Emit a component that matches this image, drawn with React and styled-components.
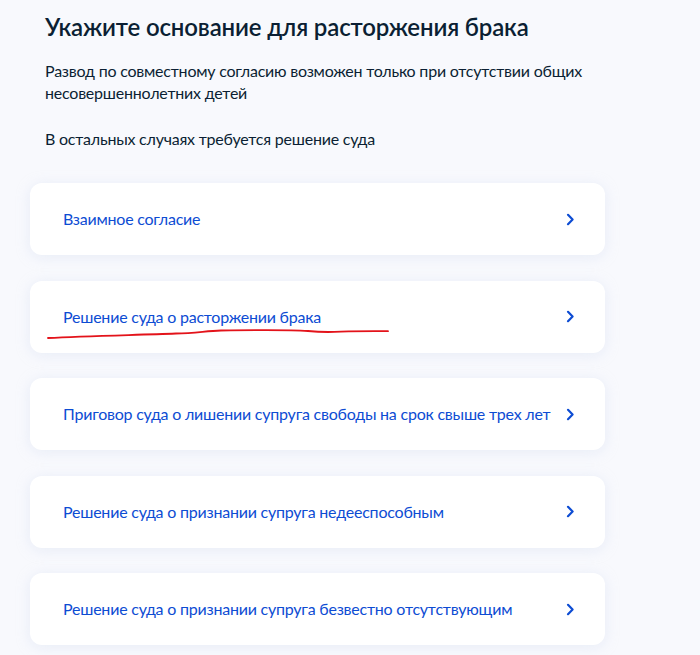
import React from "react";
import styled, { createGlobalStyle } from "styled-components";

const GlobalStyle = createGlobalStyle`
  html, body {
    margin: 0;
    padding: 0;
    background: #f8f9fd;
  }
  body {
    font-family: Lato, "Noto Sans", sans-serif;
  }
`;

const reasons = [
  "Взаимное согласие",
  "Решение суда о расторжении брака",
  "Приговор суда о лишении супруга свободы на срок свыше трех лет",
  "Решение суда о признании супруга недееспособным",
  "Решение суда о признании супруга безвестно отсутствующим",
];

const Chevron = () => (
  <svg width="9" height="13" viewBox="0 0 9 13" fill="none">
    <path
      d="M2 1.8L6.6 6.5L2 11.2"
      stroke="#0d4cd3"
      strokeWidth="2.2"
      strokeLinecap="round"
      strokeLinejoin="round"
    />
  </svg>
);

const Scribble = () => (
  <ScribbleSvg width="350" height="16" viewBox="0 0 350 16" fill="none">
    <path
      d="M2 11 C 40 9, 90 8, 130 6.5 C 150 6, 160 4, 175 3.5 C 210 3, 250 3.2, 262 4 C 272 5, 280 5.5, 295 4.6 C 315 4, 330 4.2, 342 4.2"
      stroke="#e3131a"
      strokeWidth="1.8"
      strokeLinecap="round"
    />
  </ScribbleSvg>
);

const App = () => {
  return (
    <Page>
      <GlobalStyle />
      <Title>Укажите основание для расторжения брака</Title>
      <Lead>
        Развод по совместному согласию возможен только при отсутствии общих
        несовершеннолетних детей
      </Lead>
      <Note>В остальных случаях требуется решение суда</Note>
      <List>
        {reasons.map((text, i) => (
          <Card key={text}>
            <CardText>{text}</CardText>
            <Chevron />
            {i === 1 && <Scribble />}
          </Card>
        ))}
      </List>
    </Page>
  );
};

export default App;

const Page = styled.div`
  width: 700px;
  height: 655px;
  overflow: hidden;
  box-sizing: border-box;
  padding: 12px 0 0 30px;
  color: #0b1f33;
`;

const Title = styled.h1`
  margin: 0 0 0 15px;
  font-size: 24px;
  line-height: 30px;
  font-weight: 600;
  letter-spacing: -0.15px;
  color: #0b1f33;
`;

const Lead = styled.p`
  margin: 18px 0 0 15px;
  width: 560px;
  font-size: 16px;
  line-height: 22px;
  letter-spacing: -0.22px;
  color: #0b1f33;
`;

const Note = styled.p`
  margin: 24px 0 0 15px;
  font-size: 16px;
  line-height: 22px;
  letter-spacing: -0.22px;
  color: #0b1f33;
`;

const List = styled.div`
  display: flex;
  flex-direction: column;
  gap: 25.5px;
  margin-top: 33px;
  width: 575px;
`;

const Card = styled.div`
  position: relative;
  display: flex;
  align-items: center;
  justify-content: space-between;
  height: 72px;
  box-sizing: border-box;
  padding: 0 30px 0 33px;
  background: #ffffff;
  border-radius: 12px;
  box-shadow: 0 2px 14px rgba(200, 212, 235, 0.35);
`;

const CardText = styled.span`
  font-size: 16px;
  line-height: 24px;
  letter-spacing: -0.22px;
  color: #0d4cd3;
`;

const ScribbleSvg = styled.svg`
  position: absolute;
  left: 16px;
  top: 46px;
  pointer-events: none;
`;
